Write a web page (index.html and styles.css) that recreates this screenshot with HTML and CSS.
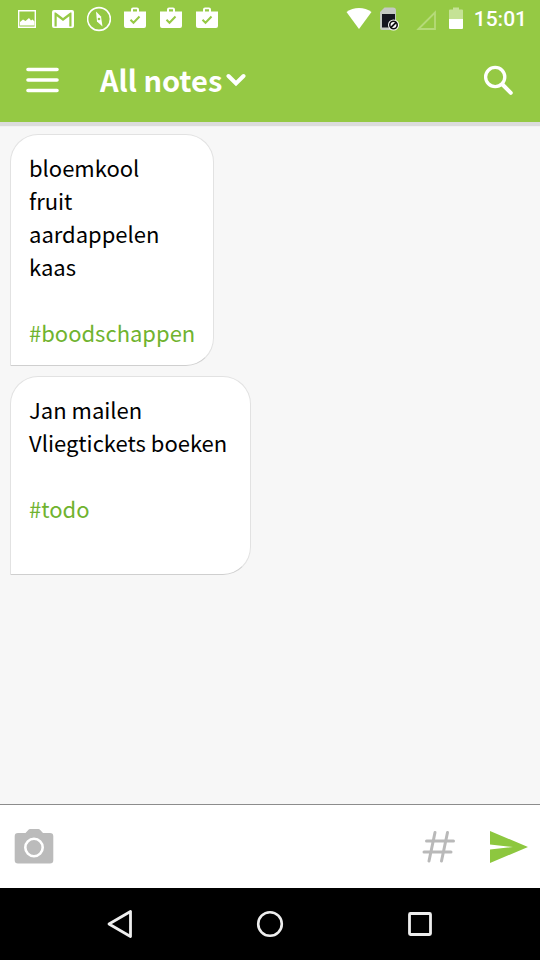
FILE: index.html
```html
<!DOCTYPE html>
<html lang="nl">
<head>
<meta charset="utf-8">
<meta name="viewport" content="width=device-width, initial-scale=1">
<title>All notes</title>
<link rel="stylesheet" href="styles.css">
</head>
<body>
<div class="status">
  <div class="status-group notifications">
    <svg width="24" height="24" viewBox="0 0 24 24"><path d="M3.700 3.700h16.600v16.600H3.700z" fill="none" stroke="#fff" stroke-width="1.400"/><path d="M5 18.500v-3.500l3-2.500 2.500 1.500 3.500-3 2 2.500 1.500-1 2 2v4z" fill="#fff"/></svg>
    <svg width="24" height="24" viewBox="0 0 24 24"><path fill="#fff" fill-rule="evenodd" d="M3 3h18a2 2 0 0 1 2 2v14a2 2 0 0 1-2 2H3a2 2 0 0 1-2-2V5a2 2 0 0 1 2-2zM3.500 5.500v14h2.200V9.200L12 14l6.300-4.800v10.300h2.200v-14h-1.200L12 11 4.700 5.500z"/></svg>
    <svg width="24" height="26" viewBox="1 0 24 26"><circle cx="13" cy="13" r="11.400" fill="none" stroke="#fff" stroke-width="1.600"/><path d="M10 5.500l5 5 1.500 10-5.500-5z" fill="#fff"/><circle cx="13" cy="13" r="1.300" fill="#95c944"/></svg>
    <svg width="24" height="24" viewBox="0 0 24 24"><use href="#bag"/></svg>
    <svg width="24" height="24" viewBox="0 0 24 24"><use href="#bag"/></svg>
    <svg width="24" height="24" viewBox="0 0 24 24"><symbol id="bag" viewBox="0 0 24 24"><path fill="#fff" fill-rule="evenodd" d="M8 4.500V2.500a2 2 0 0 1 2-2h4a2 2 0 0 1 2 2v2h7v14.500a2 2 0 0 1-2 2H3a2 2 0 0 1-2-2V4.500zM10 2.300v2.200h4V2.300z"/><path d="M7.500 12.800l3 3 6-6.300" fill="none" stroke="#95c944" stroke-width="2"/></symbol><use href="#bag"/></svg>
  </div>
  <div class="status-group">
    <svg width="26" height="24" viewBox="0 0 26 24"><path fill="#fff" d="M13 22L.5 5C7.500-.3 18.500-.3 25.500 5z"/></svg>
    <svg width="24" height="24" viewBox="0 0 24 24"><path fill="#c5c9c3" d="M2 5l4.500-4.500H15a3 3 0 0 1 3 3V23H4a2 2 0 0 1-2-2z"/><path fill="#14151f" d="M4 7h13v13.500H4z"/><circle cx="15.500" cy="18" r="5.500" fill="#fff"/><circle cx="15.500" cy="18" r="3.700" fill="#fff" stroke="#111" stroke-width="1.600"/><path d="M12.800 20.700l5.400-5.400" stroke="#111" stroke-width="1.800"/></svg>
    <svg width="30" height="24" viewBox="0 0 30 24"><path d="M10.500 22L27 5.500V22z" fill="none" stroke="#b5da79" stroke-width="1.800"/></svg>
    <svg width="24" height="24" viewBox="0 0 24 24"><path fill="#c5e296" d="M5 12V3.500a1 1 0 0 1 1-1h3V.5h6v2h3a1 1 0 0 1 1 1V12z"/><path fill="#fff" d="M5 12h14v9a1 1 0 0 1-1 1H6a1 1 0 0 1-1-1z"/></svg>
    <time>15:01</time>
  </div>
</div>
<header class="appbar">
  <button class="icon-button" type="button" aria-label="Menu"><svg width="36" height="36" viewBox="0 0 36 36"><path d="M4 7.500h29M4 18h29M4 28.500h29" fill="none" stroke="#fff" stroke-width="3.600" stroke-linecap="round"/></svg></button>
  <button class="title" type="button">All notes<svg width="20" height="16" viewBox="0 0 20 16"><path d="M2.500 5l7.500 7.500L17.500 5" fill="none" stroke="#fff" stroke-width="4" stroke-linecap="round"/></svg></button>
  <button class="icon-button search" type="button" aria-label="Search"><svg width="36" height="36" viewBox="0 0 36 36"><circle cx="15.200" cy="15" r="9.600" fill="none" stroke="#fff" stroke-width="3.300"/><path d="M22.500 22.500l8.300 8.300" stroke="#fff" stroke-width="4" stroke-linecap="round"/></svg></button>
</header>
<main class="notes">
  <article class="note">bloemkool
fruit
aardappelen
kaas

<a href="#boodschappen">#boodschappen</a></article>
  <article class="note">Jan mailen
Vliegtickets boeken 

<a href="#todo">#todo</a>
<br></article>
</main>
<form class="composer">
  <button class="icon-button" type="button" aria-label="Add photo"><svg width="40" height="40" viewBox="0 0 40 40"><path fill="#bbb" d="M4 6h7.500l3-3.300a2 2 0 0 1 1.500-.7h8.500a2 2 0 0 1 1.500.7l3 3.300h7a3.300 3.300 0 0 1 3.300 3.300v24a3.300 3.300 0 0 1-3.300 3.300H4a3.300 3.300 0 0 1-3.300-3.300v-24A3.300 3.300 0 0 1 4 6z"/><circle cx="20" cy="20.500" r="8.700" fill="none" stroke="#fff" stroke-width="2.600"/></svg></button>
  <input type="text" aria-label="New note">
  <button class="icon-button" type="button" aria-label="Add tag"><svg width="40" height="40" viewBox="0 0 40 40"><path d="M15 5.500L9 34M27.500 5.500L21.500 34M6.500 14h27M4 25h27" fill="none" stroke="#b9b9b9" stroke-width="3" stroke-linecap="round"/></svg></button>
  <button class="icon-button send" type="submit" aria-label="Send"><svg width="40" height="40" viewBox="0 0 40 40"><path fill="#8dc73f" d="M1 4l38 16L1 36V22.500L24 20 1 17.500z"/></svg></button>
</form>
<nav class="system">
  <button type="button" aria-label="Back"><svg width="32" height="32" viewBox="0 0 32 32"><path d="M5 16L26.500 3.500v25z" fill="none" stroke="#eee" stroke-width="2.800" stroke-linejoin="round"/></svg></button>
  <button type="button" aria-label="Home"><svg width="32" height="32" viewBox="0 0 32 32"><circle cx="16" cy="16" r="11.800" fill="none" stroke="#eee" stroke-width="2.600"/></svg></button>
  <button type="button" aria-label="Recent apps"><svg width="32" height="32" viewBox="0 0 32 32"><rect x="5.500" y="5.500" width="21" height="21" rx="1" fill="none" stroke="#eee" stroke-width="2.800"/></svg></button>
</nav>
</body>
</html>
```
FILE: styles.css
```css
* {
  box-sizing: border-box;
}

body {
  margin: 0;
  min-height: 100vh;
  display: flex;
  flex-direction: column;
  background: #f7f7f7;
  color: #000;
  font-family: "Noto Sans CJK SC", "Noto Sans", sans-serif;
}

button {
  padding: 0;
  border: 0;
  background: none;
  color: inherit;
  font: inherit;
  cursor: pointer;
}

svg {
  display: block;
  flex: none;
}

.status {
  display: flex;
  justify-content: space-between;
  align-items: center;
  height: 38px;
  padding: 0 13px 0 15px;
  background: #95c944;
  color: #fff;
}

.status-group {
  display: flex;
  align-items: center;
  gap: 6px;
}

.notifications {
  gap: 12px;
}

.status time {
  font: 500 21px/26px Roboto, sans-serif;
}

.appbar {
  display: flex;
  align-items: center;
  height: 84px;
  padding: 0 24px;
  background: #95c944;
  color: #fff;
  box-shadow: 0 4px 1px #dcdcdc;
}

.title {
  display: flex;
  align-items: center;
  gap: 4px;
  margin-left: 40px;
  padding-bottom: 2px;
  font-size: 29px;
  font-weight: 700;
  line-height: 44px;
}

.search {
  margin-left: auto;
}

.notes {
  flex: 1;
  display: flex;
  flex-direction: column;
  align-items: flex-start;
  gap: 10px;
  padding: 12px 10px;
}

.note {
  padding: 16px 18px;
  border: 1px solid #e2e2e2;
  border-bottom-color: #cfcfcf;
  border-radius: 28px 28px 28px 0;
  background: #fff;
  font-size: 22px;
  line-height: 33px;
  white-space: pre-wrap;
}

.note a {
  color: #70b32f;
  text-decoration: none;
}

.composer {
  display: flex;
  align-items: center;
  height: 84px;
  padding: 0 11px 0 14px;
  border-top: 1px solid #8c8c8c;
  background: #fff;
}

.composer input {
  flex: 1;
  min-width: 0;
  height: 60px;
  margin: 0 12px;
  border: 0;
  outline: 0;
  background: none;
  font: inherit;
  font-size: 22px;
}

.send {
  margin-left: 29px;
}

.system {
  display: flex;
  justify-content: center;
  align-items: center;
  gap: 118px;
  height: 72px;
  background: #000;
}
```
